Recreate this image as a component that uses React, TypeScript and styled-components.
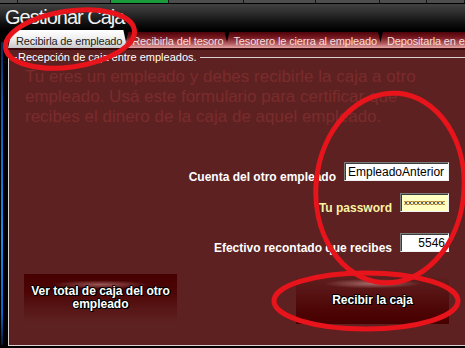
import React from "react";
import styled, { createGlobalStyle } from "styled-components";

const GlobalStyle = createGlobalStyle`
html, body {
  margin: 0;
  padding: 0;
  background: #000;
}
body {
  font-family: "Liberation Sans", Arial, sans-serif;
}
`

const Window = styled.div`
position: relative;
width: 465px;
height: 348px;
overflow: hidden;
background: #000;
display: flex;
flex-direction: column;
font-family: "Liberation Sans", Arial, sans-serif;
`

const TitleBar = styled.div`
flex: none;
height: 30px;
display: flex;
flex-direction: column;
background: linear-gradient(to bottom, #000 0px, #000 3px, #414141 4px, #2f2f2f 12px, #0e0e0e 24px, #000 30px);
`

const TopStrip = styled.div`
display: flex;
height: 3px;
border-bottom: 1px solid #000;
`

const StripSegment = styled.div<{ $w?: number; $color?: string }>`
flex: ${p => (p.$w ? "none" : "1")};
width: ${p => (p.$w ? `${p.$w}px` : "auto")};
background: ${p => p.$color ?? "#4d4d4d"};
border-right: 1px solid #161616;
`

const Title = styled.h1`
margin: 0;
padding: 2px 0 0 5px;
font-size: 20px;
line-height: 22px;
font-weight: normal;
letter-spacing: -1px;
color: #f2f2f2;
`

const Body = styled.div`
flex: 1;
display: flex;
min-height: 0;
`

const Gutter = styled.div`
flex: none;
width: 8px;
display: flex;
`

const BlueLine = styled.div`
width: 2px;
margin: 12px 0 3px 1px;
background: linear-gradient(to bottom, #0a2550, #0f58b4 20%, #1a8cf0 65%, #0b62cc 90%, #021634);
`

const Main = styled.div`
flex: 1;
min-width: 0;
display: flex;
flex-direction: column;
`

const TabStrip = styled.div`
flex: none;
height: 18px;
display: flex;
align-items: flex-start;
border-bottom: 2px solid #3e0b0d;
`

const Tab = styled.div<{ $active?: boolean }>`
flex: none;
box-sizing: border-box;
height: ${p => (p.$active ? 18 : 16)}px;
margin-top: ${p => (p.$active ? 0 : 2)}px;
margin-left: -3px;
padding: ${p => (p.$active ? 3 : 1)}px 5px 0 8px;
clip-path: polygon(4px 0, calc(100% - 4px) 0, 100% 100%, 0 100%);
font-size: 11px;
line-height: 16px;
letter-spacing: -0.15px;
white-space: nowrap;
color: ${p => (p.$active ? "#1c1c1c" : "#f6dcdc")};
background: ${p =>
        p.$active
            ? "linear-gradient(to bottom, #ffffff, #ececec 55%, #c9c9c9)"
            : "linear-gradient(to bottom, #4c0309 0%, #781820 35%, #b05a5e 72%, #cf8585 88%, #e4a4a4 100%)"};

&:first-child {
    margin-left: 0;
}
`

const Panel = styled.div`
flex: 1;
min-height: 0;
margin-bottom: 2px;
display: flex;
flex-direction: column;
background: #5e2121;
`

const GroupBox = styled.fieldset`
flex: 1;
min-width: 0;
margin: 1px 0 0 0;
padding: 0;
border: 1px solid #d8d2d2;
border-right: none;
display: flex;
flex-direction: column;
`

const GroupLabel = styled.legend`
margin-left: 8px;
padding: 0 3px 0 1px;
font-size: 11px;
line-height: 13px;
color: #fff;
`

const Description = styled.p`
margin: 3px 0 0 16px;
max-width: 420px;
font-size: 17px;
line-height: 20px;
color: #7a2c2c;
`

const Form = styled.div`
display: flex;
flex-direction: column;
align-items: flex-end;
padding-right: 16px;
`

const Row = styled.div<{ $top: number }>`
display: flex;
align-items: flex-end;
gap: 8px;
height: 19px;
margin-top: ${p => p.$top}px;
`

const FieldLabel = styled.span<{ $highlight?: boolean }>`
margin-bottom: -1px;
font-size: 12px;
font-weight: bold;
line-height: 10px;
white-space: nowrap;
color: ${p => (p.$highlight ? "#fbf2a2" : "#ffffff")};
`

const Field = styled.input<{ $w: number; $bg?: string; $align?: "left" | "right"; $tiny?: boolean }>`
box-sizing: border-box;
width: ${p => p.$w}px;
height: 19px;
margin: 0;
padding: 0 3px;
border: 1px solid;
border-color: #7c7c7c #f2f2f2 #f2f2f2 #7c7c7c;
box-shadow: inset 1px 1px 0 #3c3c3c;
background: ${p => p.$bg ?? "#fff"};
color: #000;
font-family: "Liberation Sans", Arial, sans-serif;
font-size: ${p => (p.$tiny ? 8 : 12)}px;
text-align: ${p => p.$align ?? "left"};
outline: none;
`

const ButtonRow = styled.div`
display: flex;
justify-content: space-between;
align-items: flex-start;
margin: 22px 16px 0 15px;
`

const ActionButton = styled.button<{ $pressed?: boolean }>`
width: 153px;
height: 48px;
margin-top: ${p => (p.$pressed ? 2 : 0)}px;
padding: 0;
border: none;
cursor: pointer;
font-family: "Liberation Sans", Arial, sans-serif;
font-size: 12px;
font-weight: bold;
line-height: 13px;
color: #fff;
text-shadow: 1px 0 0 #000, -1px 0 0 #000, 0 1px 0 #000, 0 -1px 0 #000, 1px 1px 0 #000, -1px -1px 0 #000;
background: ${p =>
        p.$pressed
            ? "radial-gradient(ellipse 32% 10% at 50% 16%, rgba(230, 170, 170, 0.55), rgba(230, 170, 170, 0) 100%), linear-gradient(to bottom, #5e2020 0%, #571313 35%, #4c0404 75%, #470000 100%)"
            : "radial-gradient(ellipse 32% 9% at 50% 22%, rgba(230, 170, 170, 0.5), rgba(230, 170, 170, 0) 100%), linear-gradient(to bottom, #470000 0%, #4c0404 35%, #571515 70%, #5e2020 100%)"};
`

const Annotations = styled.svg`
position: absolute;
left: 0;
top: 0;
pointer-events: none;
`

const stripSegments = [
    { w: 17 },
    { w: 92 },
    { w: 57, color: "#1b9a3c" },
    { w: 74 },
    { w: 71 },
    { w: 63 },
    { w: 46 },
    {},
];

const tabs = [
    "Recibirla de empleado",
    "Recibirla del tesoro",
    "Tesorero le cierra al empleado",
    "Depositarla en el banco",
];

const App: React.FC = () => {
    return (
        <>
            <GlobalStyle />
            <Window>
                <TitleBar>
                    <TopStrip>
                        {stripSegments.map((s, i) => (
                            <StripSegment key={i} $w={s.w} $color={s.color} />
                        ))}
                    </TopStrip>
                    <Title>Gestionar Caja</Title>
                </TitleBar>
                <Body>
                    <Gutter>
                        <BlueLine />
                    </Gutter>
                    <Main>
                        <TabStrip>
                            {tabs.map((t, i) => (
                                <Tab key={t} $active={i === 0}>{t}</Tab>
                            ))}
                        </TabStrip>
                        <Panel>
                            <GroupBox>
                                <GroupLabel>Recepción de caja entre empleados.</GroupLabel>
                                <Description>
                                    Tu eres un empleado y debes recibirle la caja a otro empleado. Usá este
                                    formulario para certificar que recibes el dinero de la caja de aquel empleado.
                                </Description>
                                <Form>
                                    <Row $top={35}>
                                        <FieldLabel>Cuenta del otro empleado</FieldLabel>
                                        <Field $w={105} defaultValue="EmpleadoAnterior" readOnly />
                                    </Row>
                                    <Row $top={12}>
                                        <FieldLabel $highlight>Tu password</FieldLabel>
                                        <Field $w={49} $bg="#ffffc2" $tiny defaultValue="xxxxxxxxxxx" readOnly />
                                    </Row>
                                    <Row $top={21}>
                                        <FieldLabel>Efectivo recontado que recibes</FieldLabel>
                                        <Field $w={49} $align="right" defaultValue="5546" readOnly />
                                    </Row>
                                </Form>
                                <ButtonRow>
                                    <ActionButton>
                                        Ver total de caja del otro
                                        <br />
                                        empleado
                                    </ActionButton>
                                    <ActionButton $pressed>Recibir la caja</ActionButton>
                                </ButtonRow>
                            </GroupBox>
                        </Panel>
                    </Main>
                </Body>
                <Annotations width={465} height={348} viewBox="0 0 465 348">
                    <g fill="none" stroke="#e8141c" strokeWidth={5}>
                        <ellipse cx={70} cy={39} rx={65} ry={28} transform="rotate(-8 70 39)" />
                        <ellipse cx={390} cy={188} rx={74} ry={95} transform="rotate(5 390 188)" />
                        <ellipse cx={366} cy={301} rx={92} ry={28} />
                    </g>
                </Annotations>
            </Window>
        </>
    )
}

export default App;
